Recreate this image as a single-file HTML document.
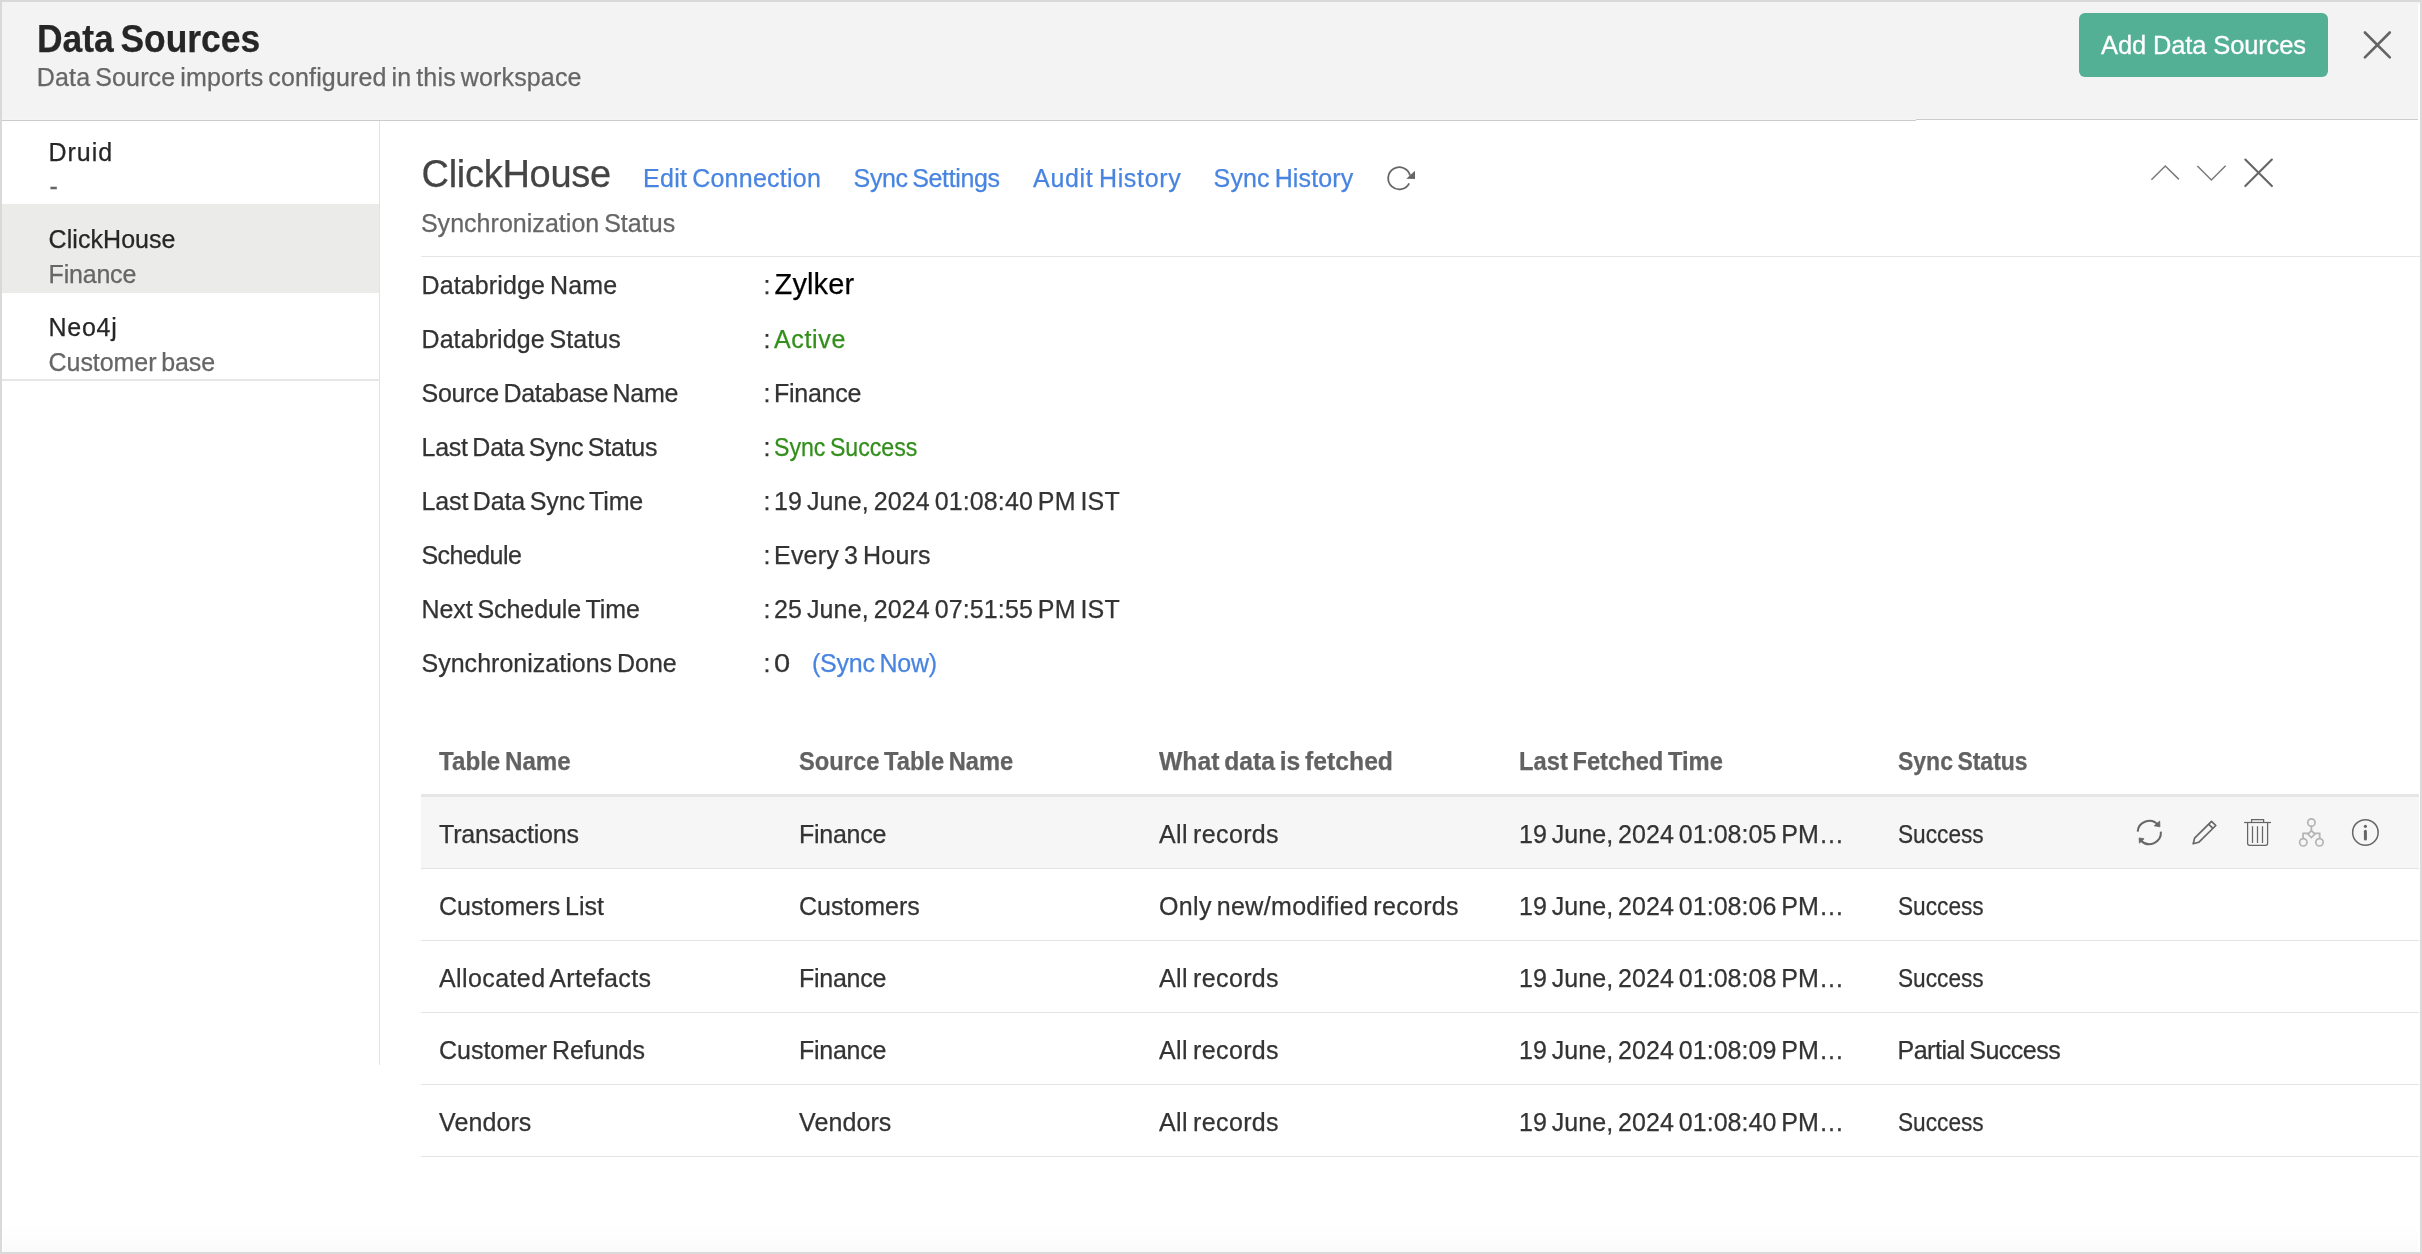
<!DOCTYPE html>
<html lang="en"><head><meta charset="utf-8"><title>Data Sources</title>
<style>
*{box-sizing:border-box;margin:0;padding:0}
html,body{width:2422px;height:1254px;overflow:hidden;background:#fff}
body{font-family:"Liberation Sans",sans-serif;position:relative}
#app{position:absolute;left:0;top:0;width:2422px;height:1254px;overflow:hidden;background:#fff;box-shadow:inset 0 0 0 2px #d9d9d9;will-change:transform}
.t{position:absolute;transform-origin:0 50%;-webkit-text-stroke:0.25px;white-space:nowrap;line-height:1;font-weight:400;text-decoration:none;display:block}
svg{position:absolute;overflow:visible}
.hdr{position:absolute;left:2px;top:2px;width:2416px;height:119px;background:#f3f3f3;border-bottom:1px solid #cbcbcb;box-shadow:inset 0 -1px 0 #f5f5f5;z-index:1}
.hdr:before{content:"";position:absolute;left:1914px;top:116px;width:502px;height:3px;background:linear-gradient(#f5f5f5 0,#f5f5f5 1px,#cbcbcb 1px,#cbcbcb 2px,#fff 2px,#fff 3px)}
.hdr:after{content:"";position:absolute;left:2416px;top:0;width:2px;height:2px;background:#f3f3f3}
.btn{position:absolute;left:2077px;top:11px;width:249px;height:63.5px;background:#54b095;border:0;border-radius:6px;font:inherit;display:block}
.btn .t{-webkit-text-stroke:0.3px}
.side{position:absolute;left:2px;top:120px;width:378px;height:945px;border-right:1px solid #e2e2e2;list-style:none}
.side li{position:absolute;left:0;width:377px}
.side li.on{background:#ebebea}
.side li.last{border-bottom:2px solid #e6e6e6}
.main{position:absolute;left:380px;top:120px;width:2039px;height:1132px}
.hr{position:absolute;left:41px;top:136px;width:1999px;height:1px;background:#e6e6e6}
.kv{position:absolute;left:41px;width:1998px;height:54px}
.tbl{position:absolute;left:41px;top:610px;width:1998px;height:427px}
.thead{position:absolute;left:0;top:0;width:1998px;height:67px;border-bottom:3px solid #e6e6e6}
.tr{position:absolute;left:0;width:1998px;height:72px;border-bottom:1px solid #e4e4e4}
.tr.hov{background:#f6f6f6}
.botgrad{position:absolute;left:3px;top:1224px;width:2415px;height:28px;background:linear-gradient(#fff,#fafafa)}
</style></head>
<body>
<div id="app">
  <div class="hdr">
    <h1 class="t" style="left:35.29px;top:18px;font-size:38px;transform:scaleX(0.9312);word-spacing:-3.23px;font-weight:700;color:#262626">Data Sources</h1>
    <p class="t" style="left:34.80px;top:63px;font-size:25px;letter-spacing:0.152px;word-spacing:-2.12px;color:#666">Data Source imports configured in this workspace</p>
    <button class="btn">
      <span class="t" style="left:22.00px;top:20px;font-size:25.5px;letter-spacing:-0.127px;color:#fff">Add Data Sources</span>
    </button>
    <svg class="ic-close" width="34" height="34" viewBox="2360 28 34 34" style="left:2358px;top:26px"><path d="M2364.9 32.5 L2389.8 57.4 M2389.8 32.5 L2364.9 57.4" fill="none" stroke="#646464" stroke-width="2.6" stroke-linecap="round"/></svg>
  </div>
  <ul class="side">
    <li style="top:0;height:84px">
      <div class="t nm" style="left:46.60px;top:20px;font-size:25px;letter-spacing:0.941px;color:#262626">Druid</div>
      <div class="t sb" style="left:47.40px;top:54px;font-size:25px;color:#666">-</div>
    </li>
    <li class="on" style="top:84px;height:89px">
      <div class="t nm" style="left:46.60px;top:23px;font-size:25px;letter-spacing:0.053px;color:#262626">ClickHouse</div>
      <div class="t sb" style="left:46.60px;top:58px;font-size:25px;letter-spacing:-0.206px;color:#666">Finance</div>
    </li>
    <li class="last" style="top:173px;height:88px">
      <div class="t nm" style="left:46.60px;top:22px;font-size:25px;letter-spacing:0.709px;color:#262626">Neo4j</div>
      <div class="t sb" style="left:46.60px;top:57px;font-size:25px;letter-spacing:-0.066px;word-spacing:-2.12px;color:#666">Customer base</div>
    </li>
  </ul>
  <div class="main">
    <h2 class="t" style="left:41.50px;top:35px;font-size:38px;letter-spacing:-0.282px;color:#444">ClickHouse</h2>
    <a class="t" style="left:263.10px;top:46px;font-size:25px;letter-spacing:0.237px;word-spacing:-2.12px;color:#4884e0">Edit Connection</a>
    <a class="t" style="left:473.60px;top:46px;font-size:25px;letter-spacing:-0.361px;word-spacing:-2.12px;color:#4884e0">Sync Settings</a>
    <a class="t" style="left:653.10px;top:46px;font-size:25px;letter-spacing:0.667px;word-spacing:-2.12px;color:#4884e0">Audit History</a>
    <a class="t" style="left:833.60px;top:46px;font-size:25px;letter-spacing:0.137px;word-spacing:-2.12px;color:#4884e0">Sync History</a>
    <div class="t" style="left:40.90px;top:91px;font-size:25px;letter-spacing:0.034px;word-spacing:-2.12px;color:#666">Synchronization Status</div>
    <svg class="ic-refresh" width="34" height="32" viewBox="1384 163 34 32" style="left:1004px;top:43px"><path d="M1409.19 183.34 A11.10 11.10 0 1 1 1410.02 175.43" fill="none" stroke="#666" stroke-width="1.8"/><path d="M1415 170.8 L1415 179 L1406.3 178.7 Z" fill="#666"/></svg>
    <svg class="ic-up" width="34" height="26" viewBox="2148 160 34 26" style="left:1768px;top:40px"><path d="M2151.4 179.8 L2165.3 166 L2178.9 179.4" fill="none" stroke="#7a7a7a" stroke-width="1.5"/></svg>
    <svg class="ic-down" width="34" height="26" viewBox="2194 160 34 26" style="left:1814px;top:40px"><path d="M2197.4 166 L2211.4 180 L2225.6 165.8" fill="none" stroke="#7a7a7a" stroke-width="1.5"/></svg>
    <svg class="ic-close" width="34" height="34" viewBox="2242 156 34 34" style="left:1862px;top:36px"><path d="M2245.3 159.5 L2271.9 186.1 M2271.9 159.5 L2245.3 186.1" fill="none" stroke="#666" stroke-width="2.1" stroke-linecap="round"/></svg>
    <div class="hr"></div>
    <div class="kv" style="top:140px">
      <span class="t k" style="left:0.50px;top:13px;font-size:25px;letter-spacing:0.128px;word-spacing:-2.12px;color:#333">Databridge Name</span>
      <span class="t c" style="left:342.40px;top:13px;font-size:25px;color:#333">:</span>
      <span class="t v" style="left:353.60px;top:10px;font-size:29px;letter-spacing:0.103px;color:#000">Zylker</span>
    </div>
    <div class="kv" style="top:194px">
      <span class="t k" style="left:0.50px;top:13px;font-size:25px;letter-spacing:0.081px;word-spacing:-2.12px;color:#333">Databridge Status</span>
      <span class="t c" style="left:342.40px;top:13px;font-size:25px;color:#333">:</span>
      <span class="t v" style="left:353.00px;top:13px;font-size:25px;letter-spacing:0.665px;color:#338f1c">Active</span>
    </div>
    <div class="kv" style="top:248px">
      <span class="t k" style="left:0.50px;top:13px;font-size:25px;letter-spacing:-0.298px;word-spacing:-2.12px;color:#333">Source Database Name</span>
      <span class="t c" style="left:342.40px;top:13px;font-size:25px;color:#333">:</span>
      <span class="t v" style="left:353.00px;top:13px;font-size:25px;letter-spacing:-0.256px;color:#333">Finance</span>
    </div>
    <div class="kv" style="top:302px">
      <span class="t k" style="left:0.50px;top:13px;font-size:25px;letter-spacing:-0.250px;word-spacing:-2.12px;color:#333">Last Data Sync Status</span>
      <span class="t c" style="left:342.40px;top:13px;font-size:25px;color:#333">:</span>
      <span class="t v" style="left:353.00px;top:13px;font-size:25px;transform:scaleX(0.9256);word-spacing:-2.12px;color:#338f1c">Sync Success</span>
    </div>
    <div class="kv" style="top:356px">
      <span class="t k" style="left:0.50px;top:13px;font-size:25px;letter-spacing:-0.141px;word-spacing:-2.12px;color:#333">Last Data Sync Time</span>
      <span class="t c" style="left:342.40px;top:13px;font-size:25px;color:#333">:</span>
      <span class="t v" style="left:353.00px;top:13px;font-size:25px;letter-spacing:0.116px;word-spacing:-2.12px;color:#333">19 June, 2024 01:08:40 PM IST</span>
    </div>
    <div class="kv" style="top:410px">
      <span class="t k" style="left:0.50px;top:13px;font-size:25px;letter-spacing:-0.563px;color:#333">Schedule</span>
      <span class="t c" style="left:342.40px;top:13px;font-size:25px;color:#333">:</span>
      <span class="t v" style="left:353.00px;top:13px;font-size:25px;letter-spacing:0.204px;word-spacing:-2.12px;color:#333">Every 3 Hours</span>
    </div>
    <div class="kv" style="top:464px">
      <span class="t k" style="left:0.50px;top:13px;font-size:25px;letter-spacing:-0.060px;word-spacing:-2.12px;color:#333">Next Schedule Time</span>
      <span class="t c" style="left:342.40px;top:13px;font-size:25px;color:#333">:</span>
      <span class="t v" style="left:353.00px;top:13px;font-size:25px;letter-spacing:0.116px;word-spacing:-2.12px;color:#333">25 June, 2024 07:51:55 PM IST</span>
    </div>
    <div class="kv" style="top:518px">
      <span class="t k" style="left:0.50px;top:13px;font-size:25px;letter-spacing:0.012px;word-spacing:-2.12px;color:#333">Synchronizations Done</span>
      <span class="t c" style="left:342.40px;top:13px;font-size:25px;color:#333">:</span>
      <span class="t v" style="left:353.00px;top:13px;font-size:25px;transform:scaleX(1.1615);color:#333">0</span>
      <a class="t" style="left:390.90px;top:13px;font-size:25px;letter-spacing:-0.205px;word-spacing:-2.12px;color:#4884e0">(Sync Now)</a>
    </div>
    <div class="tbl">
      <div class="thead">
        <span class="t" style="left:18.00px;top:19px;font-size:25px;transform:scaleX(0.9659);word-spacing:-2.12px;font-weight:700;color:#626262">Table Name</span>
        <span class="t" style="left:378.00px;top:19px;font-size:25px;transform:scaleX(0.9485);word-spacing:-2.12px;font-weight:700;color:#626262">Source Table Name</span>
        <span class="t" style="left:738.00px;top:19px;font-size:25px;transform:scaleX(0.9883);word-spacing:-2.12px;font-weight:700;color:#626262">What data is fetched</span>
        <span class="t" style="left:1098.00px;top:19px;font-size:25px;transform:scaleX(0.9493);word-spacing:-2.12px;font-weight:700;color:#626262">Last Fetched Time</span>
        <span class="t" style="left:1476.50px;top:19px;font-size:25px;transform:scaleX(0.9195);word-spacing:-2.12px;font-weight:700;color:#626262">Sync Status</span>
      </div>
      <div class="tr hov" style="top:67px">
        <span class="t" style="left:18.00px;top:25px;font-size:25px;letter-spacing:-0.208px;color:#333">Transactions</span>
        <span class="t" style="left:378.00px;top:25px;font-size:25px;letter-spacing:-0.256px;color:#333">Finance</span>
        <span class="t" style="left:738.00px;top:25px;font-size:25px;letter-spacing:0.363px;word-spacing:-2.12px;color:#333">All records</span>
        <span class="t" style="left:1098.00px;top:25px;font-size:25px;letter-spacing:0.048px;word-spacing:-2.12px;color:#333">19 June, 2024 01:08:05 PM…</span>
        <span class="t" style="left:1476.50px;top:25px;font-size:25px;transform:scaleX(0.9066);color:#333">Success</span>
        <svg class="ic-sync" width="30" height="30" viewBox="2135 818 30 30" style="left:1714px;top:21px"><path d="M2137.73 831.69 A11.60 11.60 0 0 1 2157.92 824.74" fill="none" stroke="#666" stroke-width="2"/><path d="M2160.87 831.69 A11.60 11.60 0 0 1 2141.10 840.70" fill="none" stroke="#666" stroke-width="2"/><path d="M2159.7 821.1 L2159.95 826.8 L2154.25 825.8 Z" fill="#666" stroke="#666" stroke-width="0.8" stroke-linejoin="round"/><path d="M2139.1 837.95 L2144.1 838.7 L2139.4 843.15 Z" fill="#666" stroke="#666" stroke-width="0.8" stroke-linejoin="round"/></svg>
        <svg class="ic-edit" width="30" height="30" viewBox="2190 818 30 30" style="left:1769px;top:21px"><g fill="none" stroke="#666" stroke-width="1.7" stroke-linejoin="round"><path d="M2211.5 821.3 L2215.8 825.5 L2198.7 842.3 L2193.2 843.8 L2194.6 838.1 Z"/><path d="M2208.6 824.2 L2212.9 828.4"/></g></svg>
        <svg class="ic-trash" width="32" height="32" viewBox="2242 817 32 32" style="left:1821px;top:20px"><g fill="none" stroke="#666" stroke-width="1.25"><path d="M2244.1 822.5 H2271"/><path d="M2251.6 822.5 V819.5 H2263.6 V822.5"/><path d="M2247.6 822.5 V843.3 Q2247.6 845.4 2249.7 845.4 H2265.5 Q2267.6 845.4 2267.6 843.3 V822.5"/><path d="M2252.5 826.2 V843 M2257.5 826.2 V843 M2262.5 826.2 V843"/></g></svg>
        <svg class="ic-tree" width="32" height="32" viewBox="2296 816 32 32" style="left:1875px;top:19px"><g fill="none" stroke="#b4b4b4" stroke-width="1.7"><circle cx="2311.4" cy="822.5" r="3.7"/><circle cx="2303.3" cy="842.3" r="3.7"/><circle cx="2319.5" cy="842.3" r="3.7"/><path d="M2311.4 826.3 V830.6"/><path d="M2311.4 830.6 L2314.9 834.1 L2311.4 837.6 L2307.9 834.1 Z"/><path d="M2308.2 833.4 H2303.1 V838.5 M2314.6 833.4 H2319.7 V838.5"/></g></svg>
        <svg class="ic-info" width="32" height="32" viewBox="2350 817 32 32" style="left:1929px;top:20px"><circle cx="2365.4" cy="832.4" r="12.75" fill="none" stroke="#666" stroke-width="1.5"/><circle cx="2365.4" cy="826.3" r="1.6" fill="#666"/><path d="M2365.4 831.2 V839" stroke="#666" stroke-width="3" stroke-linecap="round" fill="none"/></svg>
      </div>
      <div class="tr" style="top:139px">
        <span class="t" style="left:18.00px;top:25px;font-size:25px;letter-spacing:0.035px;word-spacing:-2.12px;color:#333">Customers List</span>
        <span class="t" style="left:378.00px;top:25px;font-size:25px;letter-spacing:-0.020px;color:#333">Customers</span>
        <span class="t" style="left:738.00px;top:25px;font-size:25px;letter-spacing:0.328px;word-spacing:-2.12px;color:#333">Only new/modified records</span>
        <span class="t" style="left:1098.00px;top:25px;font-size:25px;letter-spacing:0.048px;word-spacing:-2.12px;color:#333">19 June, 2024 01:08:06 PM…</span>
        <span class="t" style="left:1476.50px;top:25px;font-size:25px;transform:scaleX(0.9066);color:#333">Success</span>
      </div>
      <div class="tr" style="top:211px">
        <span class="t" style="left:18.00px;top:25px;font-size:25px;letter-spacing:0.399px;word-spacing:-2.12px;color:#333">Allocated Artefacts</span>
        <span class="t" style="left:378.00px;top:25px;font-size:25px;letter-spacing:-0.256px;color:#333">Finance</span>
        <span class="t" style="left:738.00px;top:25px;font-size:25px;letter-spacing:0.363px;word-spacing:-2.12px;color:#333">All records</span>
        <span class="t" style="left:1098.00px;top:25px;font-size:25px;letter-spacing:0.048px;word-spacing:-2.12px;color:#333">19 June, 2024 01:08:08 PM…</span>
        <span class="t" style="left:1476.50px;top:25px;font-size:25px;transform:scaleX(0.9066);color:#333">Success</span>
      </div>
      <div class="tr" style="top:283px">
        <span class="t" style="left:18.00px;top:25px;font-size:25px;letter-spacing:-0.027px;word-spacing:-2.12px;color:#333">Customer Refunds</span>
        <span class="t" style="left:378.00px;top:25px;font-size:25px;letter-spacing:-0.256px;color:#333">Finance</span>
        <span class="t" style="left:738.00px;top:25px;font-size:25px;letter-spacing:0.363px;word-spacing:-2.12px;color:#333">All records</span>
        <span class="t" style="left:1098.00px;top:25px;font-size:25px;letter-spacing:0.048px;word-spacing:-2.12px;color:#333">19 June, 2024 01:08:09 PM…</span>
        <span class="t" style="left:1476.50px;top:25px;font-size:25px;letter-spacing:-0.491px;word-spacing:-2.12px;color:#333">Partial Success</span>
      </div>
      <div class="tr" style="top:355px">
        <span class="t" style="left:18.00px;top:25px;font-size:25px;letter-spacing:0.094px;color:#333">Vendors</span>
        <span class="t" style="left:378.00px;top:25px;font-size:25px;letter-spacing:0.094px;color:#333">Vendors</span>
        <span class="t" style="left:738.00px;top:25px;font-size:25px;letter-spacing:0.363px;word-spacing:-2.12px;color:#333">All records</span>
        <span class="t" style="left:1098.00px;top:25px;font-size:25px;letter-spacing:0.048px;word-spacing:-2.12px;color:#333">19 June, 2024 01:08:40 PM…</span>
        <span class="t" style="left:1476.50px;top:25px;font-size:25px;transform:scaleX(0.9066);color:#333">Success</span>
      </div>
    </div>
  </div>
  <div class="botgrad"></div>
</div>
</body></html>
